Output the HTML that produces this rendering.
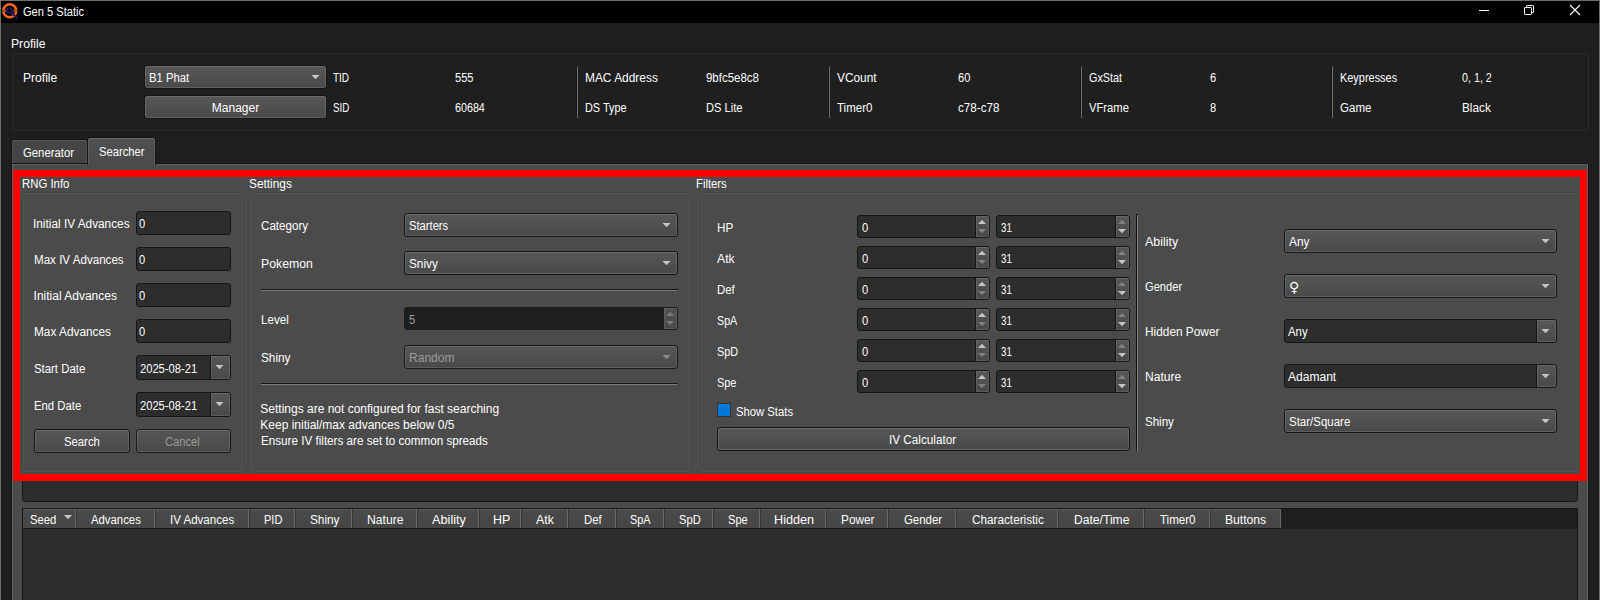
<!DOCTYPE html>
<html lang="en"><head><meta charset="utf-8"><title>Gen 5 Static</title>
<style>
html,body{margin:0;padding:0}
body{width:1600px;height:600px;overflow:hidden;background:#1e1e1e;position:relative;
 font-family:"Liberation Sans",sans-serif;font-size:12px;color:#fff}
div,span.t,svg{position:absolute;box-sizing:border-box}
.t{white-space:nowrap;line-height:14px;height:14px;color:#fff;transform-origin:0 0}
.dis{color:#9d9d9d}
.gb{border:1px solid #2c2c2c;border-radius:3px;background:#1f1f1f}
.gbp{border:1px solid #545454;border-radius:3px;box-shadow:0 0 0 1px rgba(0,0,0,.06)}
.btn{border:1px solid #151515;border-radius:3px;background:linear-gradient(#575757,#494949);box-shadow:inset 0 0 0 1px rgba(255,255,255,.12)}
.btnd{border:1px solid #1a1a1a;border-radius:3px;background:linear-gradient(#565656,#494949);box-shadow:inset 0 0 0 1px rgba(255,255,255,.11)}
.le{border:1px solid #161616;border-radius:3px;background:#2d2d2d}
.led{border:1px solid #1a1a1a;border-radius:3px;background:#1e1e1e}
.sb{background:linear-gradient(#575757,#494949);border-left:1px solid #151515;border-radius:0 2px 2px 0;box-shadow:inset 0 0 0 1px rgba(255,255,255,.1)}
.sbd{background:linear-gradient(#525252,#494949);border-left:1px solid #1a1a1a;border-radius:0 2px 2px 0;box-shadow:inset 0 0 0 1px rgba(255,255,255,.1)}
.hl{background:#151515;height:1px}
.hl2{background:#7e7e7e;height:1px}
</style></head>
<body>
<div style="left:0px;top:1px;width:1600px;height:22px;background:#000"></div>
<div style="left:0px;top:0px;width:1600px;height:1px;background:#6d6d6d"></div>
<div style="left:0px;top:0px;width:1px;height:600px;background:#6d6d6d"></div>
<div style="left:1599px;top:0px;width:1px;height:600px;background:#6d6d6d"></div>
<svg style="left:0;top:0" width="22" height="23" viewBox="0 0 22 23">
<circle cx="9.8" cy="10.8" r="6.5" fill="none" stroke="#f26522" stroke-width="2.5"/>
<path d="M4.2 9.5h2.1v2.6H4.2zM13.4 9.5h2.1v2.6h-2.1z" fill="#f26522"/>
<path d="M2.2 10.35h4.1v.9H2.2zM13.4 10.35h4.1v.9h-4.1z" fill="#000" opacity=".6"/>
<circle cx="9.4" cy="10.6" r="2.4" fill="none" stroke="#251a70" stroke-width="1.3"/>
<line x1="11.3" y1="12.5" x2="16.9" y2="17.9" stroke="#251a70" stroke-width="1.9" stroke-linecap="round"/>
</svg>
<span class="t" style="left:23.2px;top:5px;transform:scaleX(0.924);">Gen 5 Static</span>
<div style="left:1479px;top:10px;width:10px;height:1px;background:#fff"></div>
<svg style="left:1523px;top:4px" width="12" height="12" viewBox="0 0 12 12" fill="none" stroke="#fff" stroke-width="1">
<rect x="1.5" y="3.5" width="7" height="7" rx=".6"/><path d="M3.5 3.5v-1.4a.6.6 0 0 1 .6-.6h5.8a.6.6 0 0 1 .6.6v5.8a.6.6 0 0 1-.6.6h-1.4"/></svg>
<svg style="left:1569px;top:4px" width="12" height="12" viewBox="0 0 12 12" fill="none" stroke="#fff" stroke-width="1.1">
<path d="M1 1l10 10M11 1L1 11"/></svg>
<span class="t" style="left:10.88px;top:37px;transform:scaleX(1.015);">Profile</span>
<div class="gb" style="left:12px;top:53px;width:1577px;height:78px;"></div>
<span class="t" style="left:22.54px;top:71px;transform:scaleX(1.008);">Profile</span>
<div class="btn" style="left:144px;top:65px;width:183px;height:24px;"></div>
<span class="t" style="left:148.96px;top:71px;transform:scaleX(0.94);">B1 Phat</span>
<svg style="left:310px;top:75px" width="11" height="4" viewBox="0 0 11 4"><path d="M1.5 0h8L5.5 4.2z" fill="#c6c6c6"/></svg>
<div class="btn" style="left:144px;top:95px;width:183px;height:24px;"></div>
<span class="t" style="left:211.8px;top:101px;">Manager</span>
<span class="t" style="left:332.95px;top:71px;transform:scaleX(0.829);">TID</span>
<span class="t" style="left:454.98px;top:71px;transform:scaleX(0.921);">555</span>
<span class="t" style="left:332.73px;top:101px;transform:scaleX(0.816);">SID</span>
<span class="t" style="left:455.3px;top:101px;transform:scaleX(0.894);">60684</span>
<span class="t" style="left:584.91px;top:71px;transform:scaleX(0.993);">MAC Address</span>
<span class="t" style="left:705.95px;top:71px;transform:scaleX(0.955);">9bfc5e8c8</span>
<span class="t" style="left:584.99px;top:101px;transform:scaleX(0.906);">DS Type</span>
<span class="t" style="left:705.62px;top:101px;transform:scaleX(0.928);">DS Lite</span>
<span class="t" style="left:837.3px;top:71px;transform:scaleX(0.988);">VCount</span>
<span class="t" style="left:958.3px;top:71px;transform:scaleX(0.923);">60</span>
<span class="t" style="left:837.3px;top:101px;transform:scaleX(0.959);">Timer0</span>
<span class="t" style="left:958.3px;top:101px;transform:scaleX(0.97);">c78-c78</span>
<span class="t" style="left:1088.95px;top:71px;transform:scaleX(0.899);">GxStat</span>
<span class="t" style="left:1210.3px;top:71px;transform:scaleX(0.93);">6</span>
<span class="t" style="left:1088.95px;top:101px;transform:scaleX(0.935);">VFrame</span>
<span class="t" style="left:1210.3px;top:101px;transform:scaleX(0.93);">8</span>
<span class="t" style="left:1339.99px;top:71px;transform:scaleX(0.911);">Keypresses</span>
<span class="t" style="left:1462.3px;top:71px;transform:scaleX(0.894);">0, 1, 2</span>
<span class="t" style="left:1340.3px;top:101px;transform:scaleX(0.961);">Game</span>
<span class="t" style="left:1461.92px;top:101px;transform:scaleX(0.982);">Black</span>
<div style="left:576px;top:65px;width:2px;height:1px;background:#161616"></div>
<div style="left:576px;top:66px;width:1px;height:52px;background:#161616"></div>
<div style="left:577px;top:66px;width:1px;height:52px;background:#6e6e6e"></div>
<div style="left:828px;top:65px;width:2px;height:1px;background:#161616"></div>
<div style="left:828px;top:66px;width:1px;height:52px;background:#161616"></div>
<div style="left:829px;top:66px;width:1px;height:52px;background:#6e6e6e"></div>
<div style="left:1080px;top:65px;width:2px;height:1px;background:#161616"></div>
<div style="left:1080px;top:66px;width:1px;height:52px;background:#161616"></div>
<div style="left:1081px;top:66px;width:1px;height:52px;background:#6e6e6e"></div>
<div style="left:1331px;top:65px;width:2px;height:1px;background:#161616"></div>
<div style="left:1331px;top:66px;width:1px;height:52px;background:#161616"></div>
<div style="left:1332px;top:66px;width:1px;height:52px;background:#6e6e6e"></div>
<div style="left:11px;top:163px;width:1578px;height:437px;background:#4b4b4b;border:1px solid #151515;border-bottom:none;box-shadow:inset 0 1px 0 rgba(255,255,255,.1),inset 1px 0 0 rgba(255,255,255,.13),inset -1px 0 0 rgba(255,255,255,.13)"></div>
<div style="left:11px;top:139px;width:77px;height:24px;border:1px solid #151515;border-bottom:none;border-radius:3px 3px 0 0;background:linear-gradient(#464646,#434343);box-shadow:inset 0 1px 0 rgba(255,255,255,.1),inset 1px 0 0 rgba(255,255,255,.07),inset -1px 0 0 rgba(255,255,255,.07)"></div>
<span class="t" style="left:23.2px;top:146px;transform:scaleX(0.944);">Generator</span>
<div style="left:87px;top:137px;width:69px;height:28px;border:1px solid #151515;border-bottom:none;border-radius:3px 3px 0 0;background:linear-gradient(#505050,#4b4b4b);box-shadow:inset 0 1px 0 rgba(255,255,255,.13),inset 1px 0 0 rgba(255,255,255,.11),inset -1px 0 0 rgba(255,255,255,.11)"></div>
<span class="t" style="left:98.77px;top:145px;transform:scaleX(0.933);">Searcher</span>
<span class="t" style="left:21.85px;top:177px;transform:scaleX(0.947);">RNG Info</span>
<div class="gbp" style="left:23px;top:193px;width:220px;height:279px;"></div>
<span class="t" style="left:248.51px;top:177px;transform:scaleX(0.988);">Settings</span>
<div class="gbp" style="left:250px;top:193px;width:440px;height:279px;"></div>
<span class="t" style="left:695.66px;top:177px;transform:scaleX(0.938);">Filters</span>
<div class="gbp" style="left:697px;top:193px;width:881px;height:279px;"></div>
<span class="t" style="left:32.96px;top:217px;transform:scaleX(0.985);">Initial IV Advances</span>
<div class="le" style="left:136px;top:211px;width:95px;height:24px;"></div>
<span class="t" style="left:139.3px;top:217px;transform:scaleX(0.93);">0</span>
<span class="t" style="left:33.58px;top:253px;transform:scaleX(0.967);">Max IV Advances</span>
<div class="le" style="left:136px;top:247px;width:95px;height:24px;"></div>
<span class="t" style="left:139.3px;top:253px;transform:scaleX(0.93);">0</span>
<span class="t" style="left:33.55px;top:289px;">Initial Advances</span>
<div class="le" style="left:136px;top:283px;width:95px;height:24px;"></div>
<span class="t" style="left:139.3px;top:289px;transform:scaleX(0.93);">0</span>
<span class="t" style="left:33.56px;top:325px;transform:scaleX(0.986);">Max Advances</span>
<div class="le" style="left:136px;top:319px;width:95px;height:24px;"></div>
<span class="t" style="left:139.3px;top:325px;transform:scaleX(0.93);">0</span>
<span class="t" style="left:33.6px;top:362px;transform:scaleX(0.948);">Start Date</span>
<div class="le" style="left:136px;top:355px;width:95px;height:25px;"></div>
<div class="sb" style="left:210px;top:356px;width:20px;height:23px;"></div>
<svg style="left:214px;top:365px" width="11" height="4" viewBox="0 0 11 4"><path d="M1.5 0h8L5.5 4.2z" fill="#c6c6c6"/></svg>
<span class="t" style="left:140.3px;top:362px;transform:scaleX(0.93);">2025-08-21</span>
<span class="t" style="left:33.61px;top:399px;transform:scaleX(0.944);">End Date</span>
<div class="le" style="left:136px;top:392px;width:95px;height:25px;"></div>
<div class="sb" style="left:210px;top:393px;width:20px;height:23px;"></div>
<svg style="left:214px;top:402px" width="11" height="4" viewBox="0 0 11 4"><path d="M1.5 0h8L5.5 4.2z" fill="#c6c6c6"/></svg>
<span class="t" style="left:140.3px;top:399px;transform:scaleX(0.93);">2025-08-21</span>
<div class="btn" style="left:34px;top:429px;width:96px;height:24px;"></div>
<span class="t" style="left:63.66px;top:435px;transform:scaleX(0.942);">Search</span>
<div class="btnd" style="left:136px;top:429px;width:95px;height:24px;"></div>
<span class="t dis" style="left:165.4px;top:435px;transform:scaleX(0.932);">Cancel</span>
<span class="t" style="left:261.3px;top:219px;transform:scaleX(0.969);">Category</span>
<div class="btn" style="left:404px;top:213px;width:274px;height:24px;"></div>
<span class="t" style="left:408.62px;top:219px;transform:scaleX(0.933);">Starters</span>
<svg style="left:661px;top:223px" width="11" height="4" viewBox="0 0 11 4"><path d="M1.5 0h8L5.5 4.2z" fill="#c6c6c6"/></svg>
<span class="t" style="left:260.88px;top:257px;transform:scaleX(1.022);">Pokemon</span>
<div class="btn" style="left:404px;top:251px;width:274px;height:24px;"></div>
<span class="t" style="left:408.57px;top:257px;transform:scaleX(0.98);">Snivy</span>
<svg style="left:661px;top:261px" width="11" height="4" viewBox="0 0 11 4"><path d="M1.5 0h8L5.5 4.2z" fill="#c6c6c6"/></svg>
<div class="hl" style="left:261px;top:289px;width:417px;height:1px;"></div>
<div class="hl2" style="left:261px;top:290px;width:416px;height:1px;"></div>
<span class="t" style="left:260.93px;top:313px;transform:scaleX(0.97);">Level</span>
<div class="led" style="left:404px;top:307px;width:274px;height:23px;"></div>
<span class="t dis" style="left:408.97px;top:313px;transform:scaleX(0.93);">5</span>
<div class="sbd" style="left:663px;top:308px;width:14px;height:21px;"></div>
<svg style="left:665px;top:312px" width="11" height="4" viewBox="0 0 11 4"><path d="M1.0 4h8L5.0 -.2z" fill="#7a7a7a"/></svg>
<svg style="left:665px;top:321px" width="11" height="4" viewBox="0 0 11 4"><path d="M1.0 0h8L5.0 4.2z" fill="#7a7a7a"/></svg>
<span class="t" style="left:260.92px;top:351px;transform:scaleX(0.983);">Shiny</span>
<div class="btnd" style="left:404px;top:345px;width:274px;height:24px;"></div>
<span class="t dis" style="left:408.9px;top:351px;transform:scaleX(1.005);">Random</span>
<svg style="left:661px;top:355px" width="11" height="4" viewBox="0 0 11 4"><path d="M1.5 0h8L5.5 4.2z" fill="#8c8c8c"/></svg>
<div class="hl" style="left:261px;top:383px;width:417px;height:1px;"></div>
<div class="hl2" style="left:261px;top:384px;width:416px;height:1px;"></div>
<span class="t" style="left:260.3px;top:402px;">Settings are not configured for fast searching</span>
<span class="t" style="left:260.3px;top:418px;">Keep initial/max advances below 0/5</span>
<span class="t" style="left:260.93px;top:434px;transform:scaleX(0.972);">Ensure IV filters are set to common spreads</span>
<span class="t" style="left:716.62px;top:221px;transform:scaleX(0.98);">HP</span>
<div class="le" style="left:857px;top:215px;width:133px;height:23px;"></div>
<span class="t" style="left:862.3px;top:221px;transform:scaleX(0.93);">0</span>
<div class="sb" style="left:975px;top:216px;width:14px;height:21px;"></div>
<svg style="left:977px;top:220px" width="11" height="4" viewBox="0 0 11 4"><path d="M1.0 4h8L5.0 -.2z" fill="#c6c6c6"/></svg>
<svg style="left:977px;top:229px" width="11" height="4" viewBox="0 0 11 4"><path d="M1.0 0h8L5.0 4.2z" fill="#808080"/></svg>
<div class="le" style="left:996px;top:215px;width:134px;height:23px;"></div>
<span class="t" style="left:1001.3px;top:221px;transform:scaleX(0.808);">31</span>
<div class="sb" style="left:1115px;top:216px;width:14px;height:21px;"></div>
<svg style="left:1117px;top:220px" width="11" height="4" viewBox="0 0 11 4"><path d="M1.0 4h8L5.0 -.2z" fill="#808080"/></svg>
<svg style="left:1117px;top:229px" width="11" height="4" viewBox="0 0 11 4"><path d="M1.0 0h8L5.0 4.2z" fill="#c6c6c6"/></svg>
<span class="t" style="left:717.0px;top:252px;transform:scaleX(1.018);">Atk</span>
<div class="le" style="left:857px;top:246px;width:133px;height:23px;"></div>
<span class="t" style="left:862.3px;top:252px;transform:scaleX(0.93);">0</span>
<div class="sb" style="left:975px;top:247px;width:14px;height:21px;"></div>
<svg style="left:977px;top:251px" width="11" height="4" viewBox="0 0 11 4"><path d="M1.0 4h8L5.0 -.2z" fill="#c6c6c6"/></svg>
<svg style="left:977px;top:260px" width="11" height="4" viewBox="0 0 11 4"><path d="M1.0 0h8L5.0 4.2z" fill="#808080"/></svg>
<div class="le" style="left:996px;top:246px;width:134px;height:23px;"></div>
<span class="t" style="left:1001.3px;top:252px;transform:scaleX(0.808);">31</span>
<div class="sb" style="left:1115px;top:247px;width:14px;height:21px;"></div>
<svg style="left:1117px;top:251px" width="11" height="4" viewBox="0 0 11 4"><path d="M1.0 4h8L5.0 -.2z" fill="#808080"/></svg>
<svg style="left:1117px;top:260px" width="11" height="4" viewBox="0 0 11 4"><path d="M1.0 0h8L5.0 4.2z" fill="#c6c6c6"/></svg>
<span class="t" style="left:716.65px;top:283px;transform:scaleX(0.95);">Def</span>
<div class="le" style="left:857px;top:277px;width:133px;height:23px;"></div>
<span class="t" style="left:862.3px;top:283px;transform:scaleX(0.93);">0</span>
<div class="sb" style="left:975px;top:278px;width:14px;height:21px;"></div>
<svg style="left:977px;top:282px" width="11" height="4" viewBox="0 0 11 4"><path d="M1.0 4h8L5.0 -.2z" fill="#c6c6c6"/></svg>
<svg style="left:977px;top:291px" width="11" height="4" viewBox="0 0 11 4"><path d="M1.0 0h8L5.0 4.2z" fill="#808080"/></svg>
<div class="le" style="left:996px;top:277px;width:134px;height:23px;"></div>
<span class="t" style="left:1001.3px;top:283px;transform:scaleX(0.808);">31</span>
<div class="sb" style="left:1115px;top:278px;width:14px;height:21px;"></div>
<svg style="left:1117px;top:282px" width="11" height="4" viewBox="0 0 11 4"><path d="M1.0 4h8L5.0 -.2z" fill="#808080"/></svg>
<svg style="left:1117px;top:291px" width="11" height="4" viewBox="0 0 11 4"><path d="M1.0 0h8L5.0 4.2z" fill="#c6c6c6"/></svg>
<span class="t" style="left:716.71px;top:314px;transform:scaleX(0.891);">SpA</span>
<div class="le" style="left:857px;top:308px;width:133px;height:23px;"></div>
<span class="t" style="left:862.3px;top:314px;transform:scaleX(0.93);">0</span>
<div class="sb" style="left:975px;top:309px;width:14px;height:21px;"></div>
<svg style="left:977px;top:313px" width="11" height="4" viewBox="0 0 11 4"><path d="M1.0 4h8L5.0 -.2z" fill="#c6c6c6"/></svg>
<svg style="left:977px;top:322px" width="11" height="4" viewBox="0 0 11 4"><path d="M1.0 0h8L5.0 4.2z" fill="#808080"/></svg>
<div class="le" style="left:996px;top:308px;width:134px;height:23px;"></div>
<span class="t" style="left:1001.3px;top:314px;transform:scaleX(0.808);">31</span>
<div class="sb" style="left:1115px;top:309px;width:14px;height:21px;"></div>
<svg style="left:1117px;top:313px" width="11" height="4" viewBox="0 0 11 4"><path d="M1.0 4h8L5.0 -.2z" fill="#808080"/></svg>
<svg style="left:1117px;top:322px" width="11" height="4" viewBox="0 0 11 4"><path d="M1.0 0h8L5.0 4.2z" fill="#c6c6c6"/></svg>
<span class="t" style="left:716.69px;top:345px;transform:scaleX(0.905);">SpD</span>
<div class="le" style="left:857px;top:339px;width:133px;height:23px;"></div>
<span class="t" style="left:862.3px;top:345px;transform:scaleX(0.93);">0</span>
<div class="sb" style="left:975px;top:340px;width:14px;height:21px;"></div>
<svg style="left:977px;top:344px" width="11" height="4" viewBox="0 0 11 4"><path d="M1.0 4h8L5.0 -.2z" fill="#c6c6c6"/></svg>
<svg style="left:977px;top:353px" width="11" height="4" viewBox="0 0 11 4"><path d="M1.0 0h8L5.0 4.2z" fill="#808080"/></svg>
<div class="le" style="left:996px;top:339px;width:134px;height:23px;"></div>
<span class="t" style="left:1001.3px;top:345px;transform:scaleX(0.808);">31</span>
<div class="sb" style="left:1115px;top:340px;width:14px;height:21px;"></div>
<svg style="left:1117px;top:344px" width="11" height="4" viewBox="0 0 11 4"><path d="M1.0 4h8L5.0 -.2z" fill="#808080"/></svg>
<svg style="left:1117px;top:353px" width="11" height="4" viewBox="0 0 11 4"><path d="M1.0 0h8L5.0 4.2z" fill="#c6c6c6"/></svg>
<span class="t" style="left:716.69px;top:376px;transform:scaleX(0.91);">Spe</span>
<div class="le" style="left:857px;top:370px;width:133px;height:23px;"></div>
<span class="t" style="left:862.3px;top:376px;transform:scaleX(0.93);">0</span>
<div class="sb" style="left:975px;top:371px;width:14px;height:21px;"></div>
<svg style="left:977px;top:375px" width="11" height="4" viewBox="0 0 11 4"><path d="M1.0 4h8L5.0 -.2z" fill="#c6c6c6"/></svg>
<svg style="left:977px;top:384px" width="11" height="4" viewBox="0 0 11 4"><path d="M1.0 0h8L5.0 4.2z" fill="#808080"/></svg>
<div class="le" style="left:996px;top:370px;width:134px;height:23px;"></div>
<span class="t" style="left:1001.3px;top:376px;transform:scaleX(0.808);">31</span>
<div class="sb" style="left:1115px;top:371px;width:14px;height:21px;"></div>
<svg style="left:1117px;top:375px" width="11" height="4" viewBox="0 0 11 4"><path d="M1.0 4h8L5.0 -.2z" fill="#808080"/></svg>
<svg style="left:1117px;top:384px" width="11" height="4" viewBox="0 0 11 4"><path d="M1.0 0h8L5.0 4.2z" fill="#c6c6c6"/></svg>
<div style="left:717px;top:403px;width:14px;height:14px;background:#0078d7;border:1px solid #3a312c"></div>
<span class="t" style="left:735.96px;top:405px;transform:scaleX(0.94);">Show Stats</span>
<div class="btn" style="left:717px;top:427px;width:413px;height:24px;"></div>
<span class="t" style="left:889.12px;top:433px;transform:scaleX(0.978);">IV Calculator</span>
<div style="left:1136px;top:214px;width:2px;height:1px;background:#151515"></div>
<div style="left:1136px;top:214px;width:1px;height:237px;background:#151515"></div>
<div style="left:1137px;top:215px;width:1px;height:236px;background:#7e7e7e"></div>
<span class="t" style="left:1145.1px;top:235px;transform:scaleX(1.037);">Ability</span>
<div class="btn" style="left:1284px;top:229px;width:273px;height:24px;"></div>
<span class="t" style="left:1289.2px;top:235px;transform:scaleX(0.99);">Any</span>
<svg style="left:1540px;top:239px" width="11" height="4" viewBox="0 0 11 4"><path d="M1.5 0h8L5.5 4.2z" fill="#c6c6c6"/></svg>
<span class="t" style="left:1145.1px;top:280px;transform:scaleX(0.927);">Gender</span>
<div class="btn" style="left:1284px;top:274px;width:273px;height:24px;"></div>
<span class="t" style="left:1289px;top:277px;font-family:'DejaVu Sans',sans-serif;font-size:14px;line-height:20px;height:20px">♀</span>
<svg style="left:1540px;top:284px" width="11" height="4" viewBox="0 0 11 4"><path d="M1.5 0h8L5.5 4.2z" fill="#c6c6c6"/></svg>
<span class="t" style="left:1144.71px;top:325px;transform:scaleX(0.988);">Hidden Power</span>
<div class="le" style="left:1284px;top:319px;width:273px;height:24px;"></div>
<div class="sb" style="left:1536px;top:320px;width:20px;height:22px;"></div>
<span class="t" style="left:1288.2px;top:325px;transform:scaleX(0.952);">Any</span>
<svg style="left:1540px;top:329px" width="11" height="4" viewBox="0 0 11 4"><path d="M1.5 0h8L5.5 4.2z" fill="#c6c6c6"/></svg>
<span class="t" style="left:1144.69px;top:370px;transform:scaleX(1.006);">Nature</span>
<div class="le" style="left:1284px;top:364px;width:273px;height:24px;"></div>
<div class="sb" style="left:1536px;top:365px;width:20px;height:22px;"></div>
<span class="t" style="left:1288.2px;top:370px;transform:scaleX(1.004);">Adamant</span>
<svg style="left:1540px;top:374px" width="11" height="4" viewBox="0 0 11 4"><path d="M1.5 0h8L5.5 4.2z" fill="#c6c6c6"/></svg>
<span class="t" style="left:1144.74px;top:415px;transform:scaleX(0.962);">Shiny</span>
<div class="btn" style="left:1284px;top:409px;width:273px;height:24px;"></div>
<span class="t" style="left:1288.74px;top:415px;transform:scaleX(0.957);">Star/Square</span>
<svg style="left:1540px;top:419px" width="11" height="4" viewBox="0 0 11 4"><path d="M1.5 0h8L5.5 4.2z" fill="#c6c6c6"/></svg>
<div style="left:22px;top:478px;width:1556px;height:24px;background:#2d2d2d;border:1px solid #171717;border-radius:3px"></div>
<div style="left:22px;top:508px;width:1556px;height:92px;background:#2d2d2d;border:1px solid #171717;border-bottom:none"></div>
<div style="left:23px;top:509px;width:1554px;height:20px;background:#1e1e1e"></div>
<div style="left:23px;top:509px;width:53px;height:20px;background:linear-gradient(#4a4a4a,#464646);border-bottom:1px solid #171717;box-shadow:inset 0 1px 0 rgba(255,255,255,.09)"></div>
<div style="left:75px;top:509px;width:1px;height:19px;background:#6a6a6a"></div>
<span class="t" style="left:29.56px;top:513px;transform:scaleX(0.938);">Seed</span>
<div style="left:76px;top:509px;width:79px;height:20px;background:linear-gradient(#4a4a4a,#464646);border-bottom:1px solid #171717;box-shadow:inset 0 1px 0 rgba(255,255,255,.09),inset 1px 0 0 #343434"></div>
<div style="left:154px;top:509px;width:1px;height:19px;background:#6a6a6a"></div>
<span class="t" style="left:91.1px;top:513px;transform:scaleX(0.945);">Advances</span>
<div style="left:155px;top:509px;width:94px;height:20px;background:linear-gradient(#4a4a4a,#464646);border-bottom:1px solid #171717;box-shadow:inset 0 1px 0 rgba(255,255,255,.09),inset 1px 0 0 #343434"></div>
<div style="left:248px;top:509px;width:1px;height:19px;background:#6a6a6a"></div>
<span class="t" style="left:170.34px;top:513px;transform:scaleX(0.962);">IV Advances</span>
<div style="left:249px;top:509px;width:46px;height:20px;background:linear-gradient(#4a4a4a,#464646);border-bottom:1px solid #171717;box-shadow:inset 0 1px 0 rgba(255,255,255,.09),inset 1px 0 0 #343434"></div>
<div style="left:294px;top:509px;width:1px;height:19px;background:#6a6a6a"></div>
<span class="t" style="left:263.98px;top:513px;transform:scaleX(0.921);">PID</span>
<div style="left:295px;top:509px;width:57px;height:20px;background:linear-gradient(#4a4a4a,#464646);border-bottom:1px solid #171717;box-shadow:inset 0 1px 0 rgba(255,255,255,.09),inset 1px 0 0 #343434"></div>
<div style="left:351px;top:509px;width:1px;height:19px;background:#6a6a6a"></div>
<span class="t" style="left:309.92px;top:513px;transform:scaleX(0.983);">Shiny</span>
<div style="left:352px;top:509px;width:65px;height:20px;background:linear-gradient(#4a4a4a,#464646);border-bottom:1px solid #171717;box-shadow:inset 0 1px 0 rgba(255,255,255,.09),inset 1px 0 0 #343434"></div>
<div style="left:416px;top:509px;width:1px;height:19px;background:#6a6a6a"></div>
<span class="t" style="left:366.89px;top:513px;transform:scaleX(1.014);">Nature</span>
<div style="left:417px;top:509px;width:62px;height:20px;background:linear-gradient(#4a4a4a,#464646);border-bottom:1px solid #171717;box-shadow:inset 0 1px 0 rgba(255,255,255,.09),inset 1px 0 0 #343434"></div>
<div style="left:478px;top:509px;width:1px;height:19px;background:#6a6a6a"></div>
<span class="t" style="left:432.3px;top:513px;transform:scaleX(1.062);">Ability</span>
<div style="left:479px;top:509px;width:42px;height:20px;background:linear-gradient(#4a4a4a,#464646);border-bottom:1px solid #171717;box-shadow:inset 0 1px 0 rgba(255,255,255,.09),inset 1px 0 0 #343434"></div>
<div style="left:520px;top:509px;width:1px;height:19px;background:#6a6a6a"></div>
<span class="t" style="left:492.87px;top:513px;transform:scaleX(1.033);">HP</span>
<div style="left:521px;top:509px;width:47px;height:20px;background:linear-gradient(#4a4a4a,#464646);border-bottom:1px solid #171717;box-shadow:inset 0 1px 0 rgba(255,255,255,.09),inset 1px 0 0 #343434"></div>
<div style="left:567px;top:509px;width:1px;height:19px;background:#6a6a6a"></div>
<span class="t" style="left:536.3px;top:513px;transform:scaleX(1.029);">Atk</span>
<div style="left:568px;top:509px;width:48px;height:20px;background:linear-gradient(#4a4a4a,#464646);border-bottom:1px solid #171717;box-shadow:inset 0 1px 0 rgba(255,255,255,.09),inset 1px 0 0 #343434"></div>
<div style="left:615px;top:509px;width:1px;height:19px;background:#6a6a6a"></div>
<span class="t" style="left:583.96px;top:513px;transform:scaleX(0.944);">Def</span>
<div style="left:616px;top:509px;width:48px;height:20px;background:linear-gradient(#4a4a4a,#464646);border-bottom:1px solid #171717;box-shadow:inset 0 1px 0 rgba(255,255,255,.09),inset 1px 0 0 #343434"></div>
<div style="left:663px;top:509px;width:1px;height:19px;background:#6a6a6a"></div>
<span class="t" style="left:629.99px;top:513px;transform:scaleX(0.909);">SpA</span>
<div style="left:664px;top:509px;width:49px;height:20px;background:linear-gradient(#4a4a4a,#464646);border-bottom:1px solid #171717;box-shadow:inset 0 1px 0 rgba(255,255,255,.09),inset 1px 0 0 #343434"></div>
<div style="left:712px;top:509px;width:1px;height:19px;background:#6a6a6a"></div>
<span class="t" style="left:678.97px;top:513px;transform:scaleX(0.932);">SpD</span>
<div style="left:713px;top:509px;width:47px;height:20px;background:linear-gradient(#4a4a4a,#464646);border-bottom:1px solid #171717;box-shadow:inset 0 1px 0 rgba(255,255,255,.09),inset 1px 0 0 #343434"></div>
<div style="left:759px;top:509px;width:1px;height:19px;background:#6a6a6a"></div>
<span class="t" style="left:727.98px;top:513px;transform:scaleX(0.925);">Spe</span>
<div style="left:760px;top:509px;width:66px;height:20px;background:linear-gradient(#4a4a4a,#464646);border-bottom:1px solid #171717;box-shadow:inset 0 1px 0 rgba(255,255,255,.09),inset 1px 0 0 #343434"></div>
<div style="left:825px;top:509px;width:1px;height:19px;background:#6a6a6a"></div>
<span class="t" style="left:773.84px;top:513px;transform:scaleX(1.056);">Hidden</span>
<div style="left:826px;top:509px;width:62px;height:20px;background:linear-gradient(#4a4a4a,#464646);border-bottom:1px solid #171717;box-shadow:inset 0 1px 0 rgba(255,255,255,.09),inset 1px 0 0 #343434"></div>
<div style="left:887px;top:509px;width:1px;height:19px;background:#6a6a6a"></div>
<span class="t" style="left:840.91px;top:513px;transform:scaleX(0.985);">Power</span>
<div style="left:888px;top:509px;width:68px;height:20px;background:linear-gradient(#4a4a4a,#464646);border-bottom:1px solid #171717;box-shadow:inset 0 1px 0 rgba(255,255,255,.09),inset 1px 0 0 #343434"></div>
<div style="left:955px;top:509px;width:1px;height:19px;background:#6a6a6a"></div>
<span class="t" style="left:904.3px;top:513px;transform:scaleX(0.95);">Gender</span>
<div style="left:956px;top:509px;width:102px;height:20px;background:linear-gradient(#4a4a4a,#464646);border-bottom:1px solid #171717;box-shadow:inset 0 1px 0 rgba(255,255,255,.09),inset 1px 0 0 #343434"></div>
<div style="left:1057px;top:509px;width:1px;height:19px;background:#6a6a6a"></div>
<span class="t" style="left:972.3px;top:513px;transform:scaleX(0.979);">Characteristic</span>
<div style="left:1058px;top:509px;width:86px;height:20px;background:linear-gradient(#4a4a4a,#464646);border-bottom:1px solid #171717;box-shadow:inset 0 1px 0 rgba(255,255,255,.09),inset 1px 0 0 #343434"></div>
<div style="left:1143px;top:509px;width:1px;height:19px;background:#6a6a6a"></div>
<span class="t" style="left:1073.89px;top:513px;transform:scaleX(1.009);">Date/Time</span>
<div style="left:1144px;top:509px;width:66px;height:20px;background:linear-gradient(#4a4a4a,#464646);border-bottom:1px solid #171717;box-shadow:inset 0 1px 0 rgba(255,255,255,.09),inset 1px 0 0 #343434"></div>
<div style="left:1209px;top:509px;width:1px;height:19px;background:#6a6a6a"></div>
<span class="t" style="left:1160.3px;top:513px;transform:scaleX(0.959);">Timer0</span>
<div style="left:1210px;top:509px;width:71px;height:20px;background:linear-gradient(#4a4a4a,#464646);border-bottom:1px solid #171717;box-shadow:inset 0 1px 0 rgba(255,255,255,.09),inset 1px 0 0 #343434"></div>
<div style="left:1280px;top:509px;width:1px;height:19px;background:#6a6a6a"></div>
<span class="t" style="left:1224.89px;top:513px;transform:scaleX(1.012);">Buttons</span>
<svg style="left:63px;top:515px" width="11" height="4" viewBox="0 0 11 4"><path d="M1.0 0h8L5.0 4.2z" fill="#c6c6c6"/></svg>
<div style="left:13px;top:170px;width:1574px;height:311px;border:7px solid #f00"></div>
</body></html>
